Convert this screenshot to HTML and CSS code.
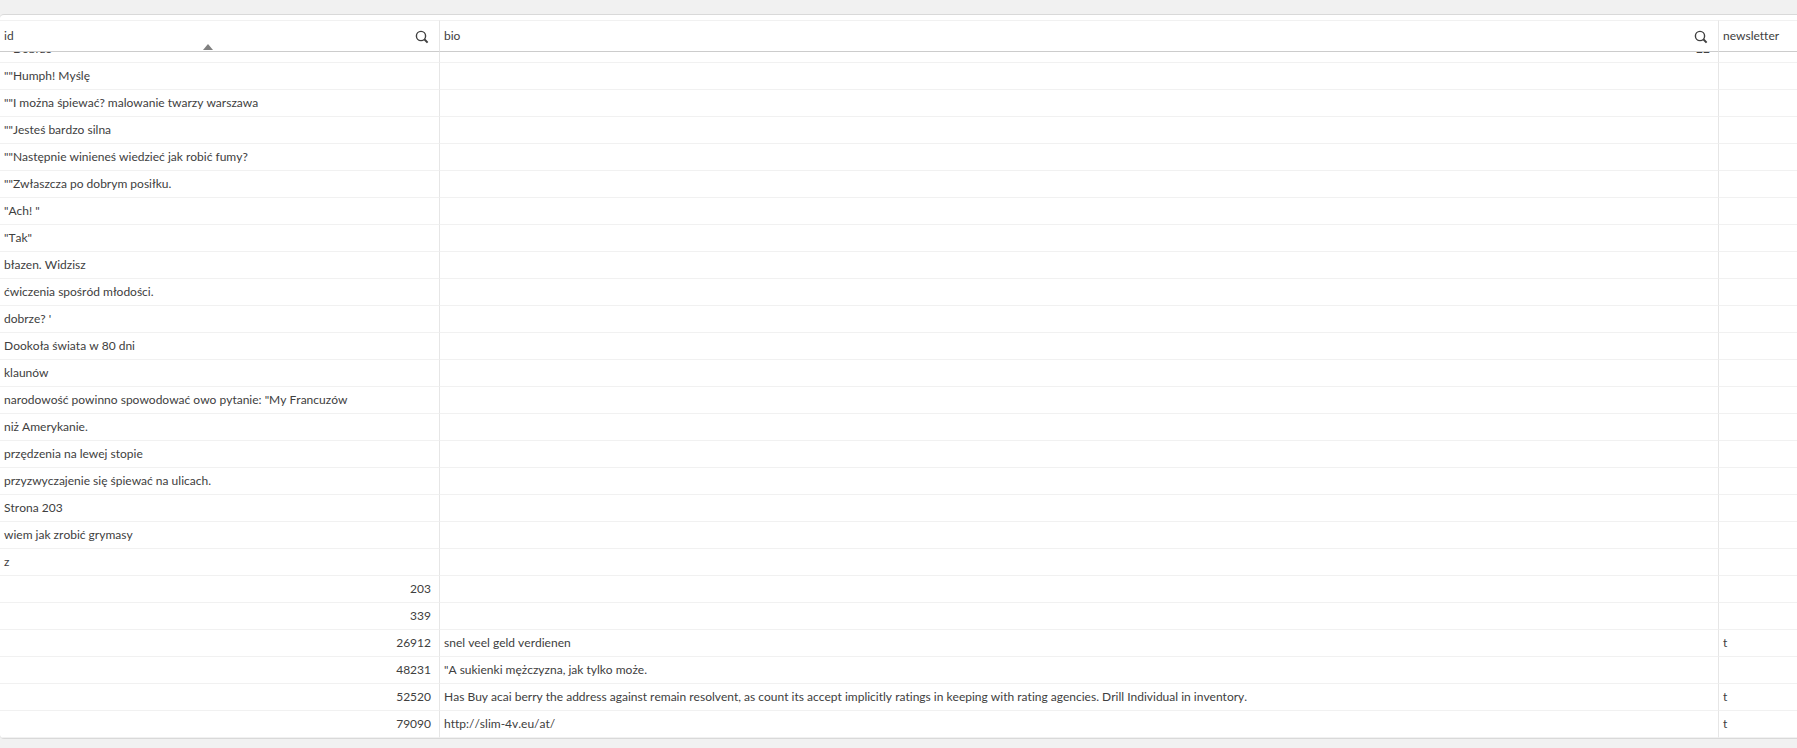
FILE: index.html
```html
<!doctype html>
<html lang="pl">
<head>
    <title>Table</title>
    <meta charset="utf-8"/>
    <link rel="stylesheet" href="styles.css">
</head>

<body onload="scrollToEnd()">

    <div class="panel">
        <div class="scroller" id="scroller">
            <table class="grid">
                <colgroup>
                    <col class="col-id">
                    <col class="col-bio">
                    <col class="col-newsletter">
                </colgroup>
                <thead>
                    <tr>
                        <th aria-sort="ascending">
                            <div class="head">
                                <button class="label">id<span class="arrow"></span></button>
                                <button class="search" aria-label="Search id">
                                    <svg width="14" height="14" viewBox="0 0 14 14"><circle cx="6" cy="6" r="4.6"/><path d="M9.3 9.3L12.6 12.6"/></svg>
                                </button>
                            </div>
                        </th>
                        <th>
                            <div class="head">
                                <button class="label">bio</button>
                                <button class="search" aria-label="Search bio">
                                    <svg width="14" height="14" viewBox="0 0 14 14"><circle cx="6" cy="6" r="4.6"/><path d="M9.3 9.3L12.6 12.6"/></svg>
                                </button>
                            </div>
                        </th>
                        <th>
                            <div class="head">
                                <button class="label">newsletter</button>
                            </div>
                        </th>
                    </tr>
                </thead>
                <tbody>
                    <tr><td>""Dobrze</td><td class="num">22</td><td></td></tr>
                    <tr><td>""Humph! Myślę</td><td></td><td></td></tr>
                    <tr><td>""I można śpiewać? malowanie twarzy warszawa</td><td></td><td></td></tr>
                    <tr><td>""Jesteś bardzo silna</td><td></td><td></td></tr>
                    <tr><td>""Następnie winieneś wiedzieć jak robić fumy?</td><td></td><td></td></tr>
                    <tr><td>""Zwłaszcza po dobrym posiłku.</td><td></td><td></td></tr>
                    <tr><td>"Ach! "</td><td></td><td></td></tr>
                    <tr><td>"Tak"</td><td></td><td></td></tr>
                    <tr><td>błazen. Widzisz</td><td></td><td></td></tr>
                    <tr><td>ćwiczenia spośród młodości.</td><td></td><td></td></tr>
                    <tr><td>dobrze? '</td><td></td><td></td></tr>
                    <tr><td>Dookoła świata w 80 dni</td><td></td><td></td></tr>
                    <tr><td>klaunów</td><td></td><td></td></tr>
                    <tr><td>narodowość powinno spowodować owo pytanie: "My Francuzów</td><td></td><td></td></tr>
                    <tr><td>niż Amerykanie.</td><td></td><td></td></tr>
                    <tr><td>przędzenia na lewej stopie</td><td></td><td></td></tr>
                    <tr><td>przyzwyczajenie się śpiewać na ulicach.</td><td></td><td></td></tr>
                    <tr><td>Strona 203</td><td></td><td></td></tr>
                    <tr><td>wiem jak zrobić grymasy</td><td></td><td></td></tr>
                    <tr><td>z</td><td></td><td></td></tr>
                    <tr><td class="num">203</td><td></td><td></td></tr>
                    <tr><td class="num">339</td><td></td><td></td></tr>
                    <tr><td class="num">26912</td><td>snel veel geld verdienen</td><td>t</td></tr>
                    <tr><td class="num">48231</td><td>"A sukienki mężczyzna, jak tylko może.</td><td></td></tr>
                    <tr><td class="num">52520</td><td>Has Buy acai berry the address against remain resolvent, as count its accept implicitly ratings in keeping with rating agencies. Drill Individual in inventory.</td><td>t</td></tr>
                    <tr><td class="num">79090</td><td>http://slim-4v.eu/at/</td><td>t</td></tr>
                </tbody>
            </table>
        </div>
    </div>

    <script>
        function scrollToEnd() {
            var scroller = document.getElementById("scroller");
            scroller.scrollTop = scroller.scrollHeight;
        }
    </script>
</body>
</html>
```
FILE: styles.css
```css
* {
    box-sizing: border-box;
}

body {
    margin: 0;
    height: 100vh;
    padding: 14px 0 9px;
    background-color: #f1f1f1;
    color: #404040;
    font-family: Lato, sans-serif;
    font-size: 12px;
    font-kerning: none;
    font-variant-ligatures: none;
    line-height: 18px;
}

.panel {
    height: 100%;
    padding-top: 5px;
    background-color: #fff;
    border-top: 1px solid #d9d9d9;
    border-bottom: 1px solid #d9d9d9;
    border-radius: 4px 0 0 4px;
    overflow: hidden;
}

.scroller {
    height: 100%;
    overflow: auto;
    scrollbar-width: none;
}

.grid {
    width: 100%;
    table-layout: fixed;
    border-collapse: separate;
    border-spacing: 0;
}

.col-id {
    width: 440px;
}

.col-newsletter {
    width: 78px;
}

th {
    position: sticky;
    top: 0;
    z-index: 1;
    height: 32px;
    padding: 0;
    background-color: #fff;
    border-top: 1px solid #f1f1f1;
    border-bottom: 1px solid #ccc;
    border-right: 1px solid #e6e6e6;
    font-weight: normal;
}

td {
    height: 27px;
    padding: 0 8px 1px 4px;
    border-bottom: 1px solid #f1f1f1;
    border-right: 1px solid #e6e6e6;
    white-space: nowrap;
}

th:last-child,
td:last-child {
    border-right: none;
}

.num {
    text-align: right;
}

.head {
    display: flex;
    height: 30px;
}

button {
    padding: 0;
    border: none;
    background: none;
    color: inherit;
    font: inherit;
    font-kerning: inherit;
    font-variant-ligatures: inherit;
    cursor: pointer;
}

.label {
    position: relative;
    flex: 1;
    padding-left: 4px;
    text-align: left;
}

.arrow {
    position: absolute;
    bottom: 1px;
    left: 50%;
    margin-left: -5px;
    border: 5px solid transparent;
    border-top: none;
    border-bottom: 6px solid #808080;
}

.search {
    display: flex;
    align-items: center;
    width: 24px;
    padding-top: 2px;
}

.search svg {
    fill: none;
    stroke: #404040;
    stroke-width: 1.4;
}

.search path {
    stroke-width: 2;
}
```
